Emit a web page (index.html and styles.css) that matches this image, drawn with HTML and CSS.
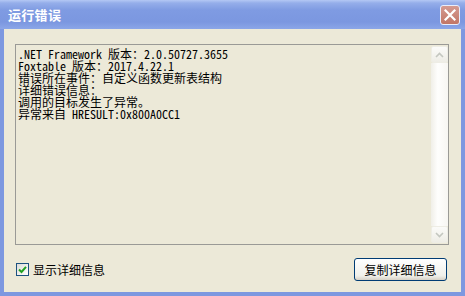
FILE: index.html
```html
<!DOCTYPE html>
<html lang="zh-CN">
<head>
    <meta charset="UTF-8">
    <title>运行错误</title>
    <link rel="stylesheet" href="styles.css">
</head>
<body>
    <div class="window">
        <div class="titlebar">
            <span class="title">运行错误</span>
            <span class="close">
                <svg width="12" height="12" viewBox="0 0 12 12">
                    <path d="M1.5 1.5 L10.5 10.5 M10.5 1.5 L1.5 10.5" stroke="#fff" stroke-width="2.2" stroke-linecap="square"/>
                </svg>
            </span>
        </div>
        <div class="client">
            <div class="textbox">
                <div class="text">.NET Framework 版本：2.0.50727.3655
Foxtable 版本：2017.4.22.1
错误所在事件：自定义函数更新表结构
详细错误信息：
调用的目标发生了异常。
异常来自 HRESULT:0x800A0CC1</div>
                <div class="scroll">
                    <div class="arrow">
                        <svg width="9" height="6" viewBox="0 0 9 6"><path d="M1 5 L4.5 1.5 L8 5" fill="none" stroke="#c4c7c0" stroke-width="1.6"/></svg>
                    </div>
                    <div class="track"></div>
                    <div class="arrow">
                        <svg width="9" height="6" viewBox="0 0 9 6"><path d="M1 1 L4.5 4.5 L8 1" fill="none" stroke="#c4c7c0" stroke-width="1.6"/></svg>
                    </div>
                </div>
            </div>
            <div class="bottom">
                <label class="check">
                    <span class="box">
                        <svg width="9" height="9" viewBox="0 0 9 9"><path d="M1 4.5 L3.5 7 L8 1.8" fill="none" stroke="#21a121" stroke-width="2"/></svg>
                    </span>
                    显示详细信息
                </label>
                <button class="button">复制详细信息</button>
            </div>
        </div>
    </div>
</body>
</html>
```

FILE: styles.css
```css
body {
    margin: 0;
    font-family: "Noto Sans Mono CJK SC", "Noto Sans CJK SC", monospace;
    font-size: 12px;
    color: #000;
}
.window {
    width: 465px;
    height: 296px;
    display: flex;
    flex-direction: column;
    background: #7d98e0;
    box-sizing: border-box;
}
.titlebar {
    height: 29px;
    display: flex;
    align-items: center;
    justify-content: space-between;
    padding: 0 5px 0 8px;
    background: linear-gradient(to bottom, #b4c8f4 0, #95aeea 3px, #7f9be2 10px, #7b97e0 22px, #8ba6e8 29px);
    flex-shrink: 0;
}
.title {
    color: #fff;
    font-family: "Noto Sans CJK SC", sans-serif;
    font-weight: bold;
    font-size: 13px;
    letter-spacing: 0.3px;
    margin-top: -1px;
}
.close {
    width: 18px;
    height: 18px;
    border: 1px solid #e8eefc;
    border-radius: 3px;
    background: linear-gradient(to bottom, #d49a91, #c27666);
    display: flex;
    align-items: center;
    justify-content: center;
    margin-top: 1px;
}
.client {
    flex: 1;
    margin: 0 4px 4px 4px;
    background: #ece9d8;
    padding: 15px 12px 0 11px;
    display: flex;
    flex-direction: column;
}
.textbox {
    height: 201px;
    border: 1px solid #9a9a96;
    display: flex;
    box-sizing: border-box;
}
.text {
    flex: 1;
    white-space: pre;
    line-height: 12px;
    padding: 3px 2px;
}
.scroll {
    width: 17px;
    display: flex;
    flex-direction: column;
    padding: 1px 0 1px 0;
}
.arrow {
    height: 15px;
    border: 1px solid #eeede5;
    border-radius: 2px;
    background: linear-gradient(to bottom, #fbfbf9, #eeede6);
    display: flex;
    align-items: center;
    justify-content: center;
}
.track {
    flex: 1;
    background: linear-gradient(to right, #f0efe8, #fefefd 40%, #f7f6f2);
}
.bottom {
    display: flex;
    justify-content: space-between;
    align-items: center;
    padding: 13px 2px 0 1px;
}
.check {
    display: flex;
    align-items: center;
    gap: 4px;
    font-family: "Noto Sans CJK SC", sans-serif;
    font-size: 12px;
}
.box {
    width: 11px;
    height: 11px;
    border: 1px solid #1c5180;
    background: linear-gradient(135deg, #dcdcd7, #ffffff);
    display: flex;
    align-items: center;
    justify-content: center;
}
.button {
    width: 93px;
    height: 23px;
    border: 1px solid #003c74;
    border-radius: 3px;
    background: linear-gradient(to bottom, #ffffff, #f0f0ea 80%, #d6d0c5);
    font-family: "Noto Sans CJK SC", sans-serif;
    font-size: 12px;
    color: #000;
    padding: 0;
}
```
